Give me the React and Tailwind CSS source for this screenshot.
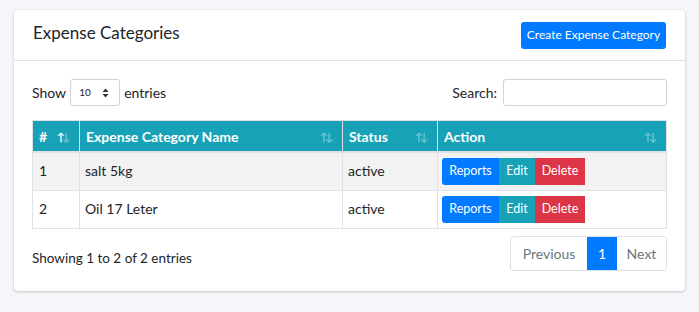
import React from 'react';

const rows = [
	{ id: 1, name: 'salt 5kg', status: 'active' },
	{ id: 2, name: 'Oil 17 Leter', status: 'active' },
];

const SortIcon = ({ active = false }) => (
	<span className="ml-auto flex items-center text-[11px] font-bold leading-none tracking-[-3px]">
		<span className={active ? 'text-white' : 'text-white/40'}>↑</span>
		<span className="text-white/40">↓</span>
	</span>
);

const HeadCell = ({ children, className = '', active }) => (
	<th className={`border-r border-[#dee2e6] px-[6px] py-0 text-left font-bold ${className}`}>
		<div className="flex h-[30px] items-center pr-[6px]">
			<span>{children}</span>
			<SortIcon active={active} />
		</div>
	</th>
);

const App = () => {
	return (
		<div className="min-h-[312px] bg-[#f4f6f9] px-[14px] pt-[10px] text-[#212529]" style={{ fontFamily: 'Lato, "Liberation Sans", sans-serif' }}>
			<div className="rounded-[4px] bg-white shadow-[0_0_1px_rgba(0,0,0,0.125),0_1px_3px_rgba(0,0,0,0.2)]">
				<div className="flex h-[51px] items-center justify-between border-b border-[#dee2e6] pl-[19px] pr-[19px]">
					<h3 className="mb-[5px] text-[17px] font-normal">Expense Categories</h3>
					<button type="button" className="h-[27px] w-[145px] rounded-[3px] bg-[#007bff] text-[12px] text-white">
						Create Expense Category
					</button>
				</div>

				<div className="px-[18px] pb-[20px] pt-[18px]">
					<div className="flex items-center justify-between">
						<div className="flex items-center gap-[4px] text-[14px]">
							<span>Show</span>
							<div className="flex h-[27px] w-[50px] items-center justify-between rounded-[3px] border border-[#ced4da] pl-[8px] pr-[10px] text-[10px]">
								<span>10</span>
								<svg width="7" height="10" viewBox="0 0 7 10" fill="#333">
									<path d="M3.5 0.5 L6.5 4 L0.5 4 Z" />
									<path d="M3.5 9.5 L6.5 6 L0.5 6 Z" />
								</svg>
							</div>
							<span>entries</span>
						</div>
						<div className="flex items-center gap-[6px] text-[14px]">
							<span>Search:</span>
							<input className="h-[27px] w-[164px] rounded-[3px] border border-[#ced4da] outline-none" />
						</div>
					</div>

					<table className="mt-[14px] w-full border-collapse border border-[#dee2e6] text-[14px]">
						<thead className="bg-[#17a2b8] text-white">
							<tr className="border-b-[2px] border-[#dee2e6]">
								<HeadCell className="w-[47px]" active>#</HeadCell>
								<HeadCell className="w-[263px]">Expense Category Name</HeadCell>
								<HeadCell className="w-[95px]">Status</HeadCell>
								<HeadCell>Action</HeadCell>
							</tr>
						</thead>
						<tbody>
							{rows.map((row, i) => (
								<tr key={row.id} className={`border-t border-[#dee2e6] ${i % 2 === 0 ? 'bg-[#f2f2f2]' : 'bg-white'}`}>
									<td className="h-[38px] border-r border-[#dee2e6] px-[6px] align-top pt-[7px]">{row.id}</td>
									<td className="border-r border-[#dee2e6] px-[5px] align-top pt-[7px]">{row.name}</td>
									<td className="border-r border-[#dee2e6] px-[5px] align-top pt-[7px]">{row.status}</td>
									<td className="px-[4px] align-middle">
										<div className="flex h-[27px] text-[12.5px] text-white">
											<button type="button" className="w-[57px] rounded-l-[3px] bg-[#007bff]">Reports</button>
											<button type="button" className="w-[36px] bg-[#17a2b8]">Edit</button>
											<button type="button" className="w-[50px] bg-[#dc3545]">Delete</button>
										</div>
									</td>
								</tr>
							))}
						</tbody>
					</table>

					<div className="mt-[7px] flex items-center justify-between">
						<p className="pt-[10px] text-[13.5px]">Showing 1 to 2 of 2 entries</p>
						<div className="flex h-[35px] overflow-hidden rounded-[3px] border border-[#dee2e6] text-[14px]">
							<span className="flex w-[76px] items-center justify-center text-[#6c757d]">Previous</span>
							<span className="flex w-[30px] items-center justify-center bg-[#007bff] text-white">1</span>
							<span className="flex w-[49px] items-center justify-center text-[#6c757d]">Next</span>
						</div>
					</div>
				</div>
			</div>
		</div>
	);
};

export default App;
